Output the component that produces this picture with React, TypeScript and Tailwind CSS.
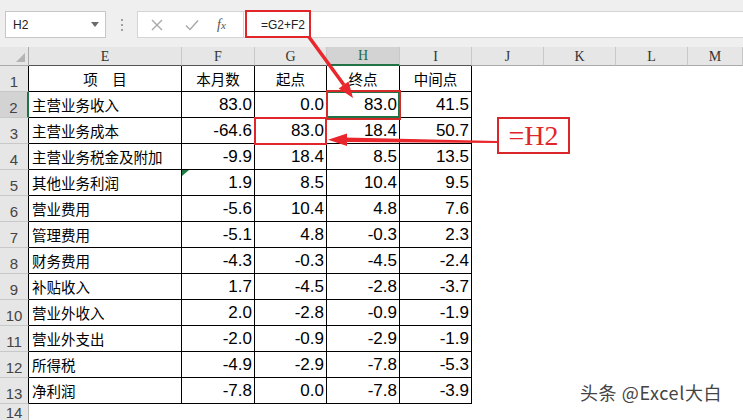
const rows: [string, string, string, string, string][] = [
  ["主营业务收入", "83.0", "0.0", "83.0", "41.5"],
  ["主营业务成本", "-64.6", "83.0", "18.4", "50.7"],
  ["主营业务税金及附加", "-9.9", "18.4", "8.5", "13.5"],
  ["其他业务利润", "1.9", "8.5", "10.4", "9.5"],
  ["营业费用", "-5.6", "10.4", "4.8", "7.6"],
  ["管理费用", "-5.1", "4.8", "-0.3", "2.3"],
  ["财务费用", "-4.3", "-0.3", "-4.5", "-2.4"],
  ["补贴收入", "1.7", "-4.5", "-2.8", "-3.7"],
  ["营业外收入", "2.0", "-2.8", "-0.9", "-1.9"],
  ["营业外支出", "-2.0", "-0.9", "-2.9", "-1.9"],
  ["所得税", "-4.9", "-2.9", "-7.8", "-5.3"],
  ["净利润", "-7.8", "0.0", "-7.8", "-3.9"],
];

const letters = ["E", "F", "G", "H", "I", "J", "K", "L", "M"];
const headers = ["项\u3000目", "本月数", "起点", "终点", "中间点"];

const cjk = "font-['Noto_Sans_CJK_SC',sans-serif]";
const num = "font-['Liberation_Sans','Noto_Sans_CJK_SC',sans-serif]";

function FormulaBar() {
  return (
    <div className="h-[47px] bg-[#efefef] pt-[11px] flex items-start">
      <div className="ml-[5px] w-[101px] h-[27px] bg-white border border-[#c6c6c6] flex items-center justify-between pl-[7px] pr-[6px]">
        <span className={`${num} text-[12px] text-[#222]`}>H2</span>
        <svg width="8" height="5" viewBox="0 0 8 5">
          <path d="M0 0h8L4 5z" fill="#6b6b6b" />
        </svg>
      </div>
      <div className="w-[31px] h-[27px] flex flex-col items-center justify-center gap-[3px]">
        <span className="w-[2px] h-[2px] bg-[#a0a0a0]" />
        <span className="w-[2px] h-[2px] bg-[#a0a0a0]" />
        <span className="w-[2px] h-[2px] bg-[#a0a0a0]" />
      </div>
      <div className="w-[106px] h-[27px] bg-white border-y border-l border-[#d4d4d4] flex items-center">
        <svg className="ml-[13px]" width="12" height="12" viewBox="0 0 12 12">
          <path d="M1 1l10 10M11 1L1 11" stroke="#a8a8a8" strokeWidth="1.4" />
        </svg>
        <svg className="ml-[22px]" width="14" height="12" viewBox="0 0 14 12">
          <path d="M1 6.5l4 4L13 1.5" stroke="#a8a8a8" strokeWidth="1.4" fill="none" />
        </svg>
        <span className="ml-[18px] font-['Liberation_Serif',serif] italic text-[14px] text-[#555] leading-none">
          f<span className="text-[11px]">x</span>
        </span>
      </div>
      <div className="flex-1 h-[27px] bg-white border-y border-l border-[#d4d4d4] flex items-center pl-[17px]">
        <span className={`${num} text-[12px] text-[#222]`}>=G2+F2</span>
      </div>
    </div>
  );
}

function Sheet() {
  return (
    <div className="grid grid-cols-[29px_153px_73px_72px_73px_72px_72px_72px_72px_1fr] bg-white">
      {/* header row */}
      <div className="h-[19px] bg-[#e6e6e6] border-r border-b border-[#a9a9a9] relative">
        <svg className="absolute right-[3px] bottom-[3px]" width="9" height="9" viewBox="0 0 9 9">
          <path d="M9 0v9H0z" fill="#b4b4b4" />
        </svg>
      </div>
      {letters.map((l, i) => (
        <div
          key={l}
          className={`h-[19px] flex items-center justify-center font-['Liberation_Serif',serif] text-[14px] border-r border-[#c8c8c8] ${
            l === "H"
              ? "bg-[#d3d3d3] text-[#1e6b41] border-b-2 border-b-[#217346]"
              : i < 5
              ? "bg-[#e6e6e6] text-[#333] border-b border-b-[#555]"
              : "bg-[#e6e6e6] text-[#333] border-b border-b-[#a9a9a9]"
          }`}
        >
          {l}
        </div>
      ))}

      {/* row 1 */}
      <RowHead n={1} />
      {headers.map((h) => (
        <div
          key={h}
          className={`h-[26px] flex items-center justify-center ${cjk} text-[14.5px] text-black border-r border-b border-black`}
        >
          {h}
        </div>
      ))}
      <Blank />

      {rows.map((r, ri) => (
        <Row key={r[0]} n={ri + 2} r={r} />
      ))}

      {/* row 14 */}
      <div className="h-[16px] bg-[#e6e6e6] border-r border-[#b8b8b8] flex items-end justify-center">
        <span className={`${num} text-[15px] text-[#444] leading-none`}>14</span>
      </div>
      <div className="col-span-9 h-[16px]" />
    </div>
  );
}

function RowHead({ n }: { n: number }) {
  const sel = n === 2;
  return (
    <div
      className={`h-[26px] flex items-end justify-center pb-[2px] border-b border-[#c8c8c8] ${
        sel ? "bg-[#d3d3d3] border-r-2 border-r-[#217346]" : "bg-[#e6e6e6] border-r border-r-black"
      }`}
    >
      <span className={`${num} text-[15px] text-[#444] leading-none`}>{n}</span>
    </div>
  );
}

function Blank() {
  return <div className="col-span-4 h-[26px]" />;
}

function Row({ n, r }: { n: number; r: [string, string, string, string, string] }) {
  return (
    <>
      <RowHead n={n} />
      <div className={`h-[26px] flex items-center pl-[3px] ${cjk} text-[14.5px] text-black border-r border-b border-black`}>
        {r[0]}
      </div>
      {r.slice(1).map((v, i) => (
        <div
          key={i}
          className={`h-[26px] flex items-center justify-end pr-[2px] ${num} text-[17px] text-black border-r border-b border-black relative`}
        >
          {n === 5 && i === 0 && (
            <svg className="absolute left-0 top-0" width="7" height="6" viewBox="0 0 7 6">
              <path d="M0 0h7L0 6z" fill="#1f7a3f" />
            </svg>
          )}
          {n === 2 && i === 2 && (
            <span className="absolute -left-px -top-px -right-px -bottom-px border-2 border-[#217346]" />
          )}
          {v}
        </div>
      ))}
      <Blank />
    </>
  );
}

export default function App() {
  return (
    <div className="w-[743px] h-[420px] overflow-hidden relative bg-white">
      <FormulaBar />
      <Sheet />

      {/* annotations */}
      <div className="absolute left-[245px] top-[10px] w-[66px] h-[28px] border-2 border-[#e1262b]" />
      <div className="absolute left-[326px] top-[90px] w-[75px] h-[30px] border-2 border-[#d42a2a]" />
      <div className="absolute left-[254px] top-[117px] w-[73px] h-[28px] border-2 border-[#e1262b]" />
      <div className="absolute left-[497px] top-[117px] w-[73px] h-[37px] border-2 border-[#d8262b] bg-white flex items-center justify-center">
        <span className="font-['Liberation_Serif',serif] text-[28px] leading-none text-[#e1262b]">=H2</span>
      </div>
      <svg className="absolute left-0 top-0 pointer-events-none" width="743" height="420" viewBox="0 0 743 420">
        <line x1="309" y1="37" x2="344" y2="85" stroke="#e8262b" strokeWidth="3.5" />
        <polygon points="353,98 338.7,88.5 348.5,81.5" fill="#e8262b" />
        <polygon points="345,137.5 497,141 497,143 345,142" fill="#e8262b" />
        <polygon points="328,139.7 347,133.5 347,146" fill="#e8262b" />
      </svg>
      <div className={`absolute left-[580px] top-[383px] ${cjk} text-[18px] tracking-[0.6px] leading-none text-[#444] whitespace-nowrap`}>
        头条 @Excel大白
      </div>
    </div>
  );
}
